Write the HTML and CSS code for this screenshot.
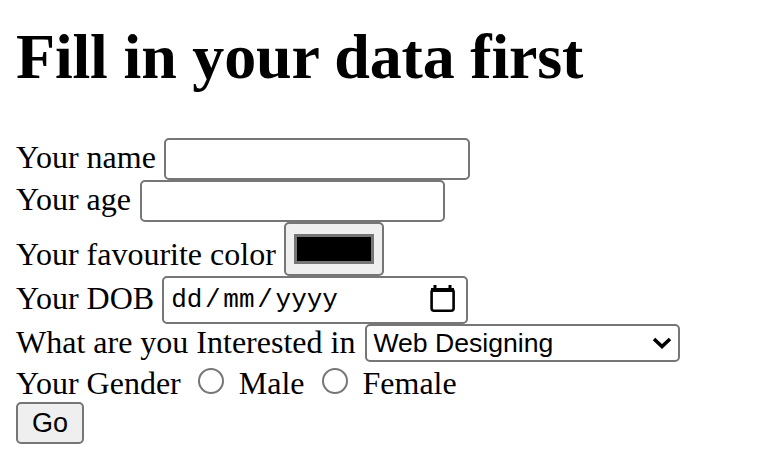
FILE: index.html
```html
<html>
	<head>
		<title>Fill in your data first</title>
		<link rel="stylesheet" href="styles.css">
	</head>
	<body>
		<h1>Fill in your data first</h1>
		<form>
			<div class="row">
				<label for="name">Your name</label>
				<input type="text" id="name" class="textbox">
			</div>
			<div class="row">
				<label for="age">Your age</label>
				<input type="text" id="age" class="textbox agebox">
			</div>
			<div class="row colorrow">
				<label for="color">Your favourite color</label>
				<input type="color" id="color" class="colorbtn" value="#000000">
			</div>
			<div class="row">
				<label>Your DOB</label>
				<span class="dob">
					<span>dd<span class="sep">/</span>mm<span class="sep">/</span>yyyy</span>
					<svg class="cal" width="26" height="28" viewBox="0 0 26 28"><path d="M5 0v4M20 0v4" stroke="#000" stroke-width="3" fill="none"/><rect x="1.6" y="4.3" width="22" height="21.4" rx="2.5" fill="none" stroke="#000" stroke-width="2.6"/><rect x="1" y="3" width="23" height="4" fill="#000"/></svg>
				</span>
			</div>
			<div class="row selectrow">
				<label>What are you Interested in</label>
				<span class="select">
					<span>Web Designing</span>
					<svg width="20" height="12" viewBox="0 0 20 12"><path d="M2 2l8 7.5 8-7.5" fill="none" stroke="#000" stroke-width="3.6"/></svg>
				</span>
			</div>
			<div class="row genderrow">
				<label>Your Gender</label>
				<input type="radio" name="gender" id="male" class="radio">
				<label for="male">Male</label>
				<input type="radio" name="gender" id="female" class="radio radio2">
				<label for="female">Female</label>
			</div>
			<div class="row">
				<button type="button" class="go">Go</button>
			</div>
		</form>
	</body>
</html>
```

FILE: styles.css
```css
body {
	margin: 0;
	padding: 16px;
	font: 32px/36px "Liberation Serif", serif;
	color: #000;
	}

h1 {
	margin: 4px 0 44px 0;
	font: bold 64px/74px "Liberation Serif", serif;
	letter-spacing: -0.18px;
	}

form {
	margin: 0;
	}

.row {
	display: flex;
	align-items: center;
	gap: 8px;
	}

.row label {
	margin-bottom: 4px;
	}

.colorrow label {
	margin: 10px 0 0 0;
	}

.selectrow label {
	margin-bottom: 2px;
	}

.genderrow {
	height: 40px;
	}

.genderrow label {
	margin: 2px 0 0 0;
	}

.textbox {
	display: block;
	box-sizing: border-box;
	width: 306px;
	height: 42px;
	margin: 0;
	border: 2px solid #767676;
	border-radius: 5px;
	background: #fff;
	}

.agebox {
	width: 305px;
	margin-left: 1px;
	}

.colorbtn {
	display: block;
	box-sizing: border-box;
	width: 100px;
	height: 54px;
	margin: 0;
	padding: 10px 8px;
	border: 2px solid #767676;
	border-radius: 5px;
	background: #efefef;
	}

.colorbtn::-webkit-color-swatch-wrapper {
	padding: 0;
	}

.colorbtn::-webkit-color-swatch {
	border: 3px solid #767676;
	border-radius: 0;
	}

.dob {
	display: flex;
	align-items: center;
	justify-content: space-between;
	box-sizing: border-box;
	width: 306px;
	height: 48px;
	padding: 0 10px 0 7px;
	border: 2px solid #767676;
	border-radius: 5px;
	background: #fff;
	font: 26px "Liberation Mono", monospace;
	}

.sep {
	margin: 0 2.7px;
	}

.cal {
	margin-bottom: 2px;
	}

.select {
	display: flex;
	align-items: center;
	justify-content: space-between;
	box-sizing: border-box;
	width: 315px;
	height: 38px;
	margin-left: 2px;
	padding: 0 6px;
	border: 2px solid #767676;
	border-radius: 5px;
	background: #fff;
	font: 26.6px "Liberation Sans", sans-serif;
	}

.radio {
	appearance: none;
	box-sizing: border-box;
	width: 26px;
	height: 26px;
	margin: 0 7px 2px 9px;
	border: 2px solid #767676;
	border-radius: 50%;
	background: #fff;
	}

.radio2 {
	margin: 0 6px 2px 10px;
	}

.go {
	display: block;
	box-sizing: border-box;
	width: 68px;
	height: 42px;
	padding: 0;
	border: 2px solid #767676;
	border-radius: 5px;
	background: #efefef;
	font: 27px "Liberation Sans", sans-serif;
	color: #000;
	}
```
